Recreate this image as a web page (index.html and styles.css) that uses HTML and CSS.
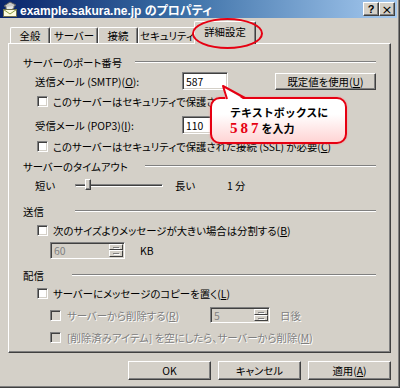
FILE: index.html
```html
<!DOCTYPE html>
<html lang="ja">
<head>
<meta charset="utf-8">
<title>プロパティ</title>
<link rel="stylesheet" href="styles.css">
</head>
<body>
<div class="window">
  <div class="titlebar">
    <svg class="app-icon" width="16" height="16" viewBox="0 0 16 16">
      <path d="M2 5 L8 1 L14 4 L8 8 Z" fill="#c8c8c8" stroke="#606060" stroke-width="1"/>
      <path d="M4 6 L4 8 L8 10 L12 7 L12 5" fill="#e8e8e8" stroke="#606060" stroke-width="1"/>
      <rect x="1.5" y="8.5" width="13" height="7" fill="#fffce0" stroke="#707050"/>
      <path d="M1.5 8.5 L8 13 L14.5 8.5" fill="none" stroke="#8a9a40" stroke-width="1"/>
    </svg>
    <span class="title">example.sakura.ne.jp のプロパティ</span>
    <div class="caption-btns">
      <span class="cap-btn">?</span>
      <span class="cap-btn cap-close">×</span>
    </div>
  </div>

  <div class="tabs">
    <div class="tab tab-general">全般</div>
    <div class="tab tab-server">サーバー</div>
    <div class="tab tab-conn">接続</div>
    <div class="tab tab-sec">セキュリティ</div>
    <div class="tab tab-adv active">詳細設定</div>
  </div>

  <div class="panel">
    <div class="row head h-port"><span class="head-label">サーバーのポート番号</span><span class="etch"></span></div>
    <div class="row indent r-smtp">
      <span class="lbl">送信メール (SMTP)(<u>O</u>):</span>
      <span class="textbox">587</span>
      <span class="btn btn-default">既定値を使用(<u>U</u>)</span>
    </div>
    <div class="row indent-cb r-cb1"><span class="cb"></span><span class="cb-text">このサーバーはセキュリティで保護された接続 (SSL) が必要(<u>Q</u>)</span></div>
    <div class="row indent r-pop">
      <span class="lbl">受信メール (POP3)(<u>I</u>):</span>
      <span class="textbox">110</span>
    </div>
    <div class="row indent-cb r-cb2"><span class="cb"></span><span class="cb-text">このサーバーはセキュリティで保護された接続 (SSL) が必要(<u>C</u>)</span></div>

    <div class="row head h-timeout"><span class="head-label">サーバーのタイムアウト</span><span class="etch"></span></div>
    <div class="row indent r-slider">
      <span class="s-short">短い</span>
      <span class="track"><span class="thumb"></span></span>
      <span class="s-long">長い</span>
      <span>1 分</span>
    </div>

    <div class="row head h-send"><span class="head-label">送信</span><span class="etch"></span></div>
    <div class="row indent-cb r-cb3"><span class="cb"></span><span class="cb-text">次のサイズよりメッセージが大きい場合は分割する(<u>B</u>)</span></div>
    <div class="row indent2 r-spin">
      <span class="spin spin-60"><span class="spin-val">60</span><span class="arrows"><span class="arr up"></span><span class="arr down"></span></span></span>
      <span class="unit">KB</span>
    </div>

    <div class="row head h-deliver"><span class="head-label">配信</span><span class="etch"></span></div>
    <div class="row indent-cb r-cb4"><span class="cb"></span><span class="cb-text">サーバーにメッセージのコピーを置く(<u>L</u>)</span></div>
    <div class="row indent2 r-dcb1">
      <span class="cb disabled"></span><span class="cb-text dis dcb-label">サーバーから削除する(<u>R</u>)</span>
      <span class="spin spin-5"><span class="spin-val">5</span><span class="arrows"><span class="arr up"></span><span class="arr down"></span></span></span>
      <span class="days dis">日後</span>
    </div>
    <div class="row indent2 r-dcb2"><span class="cb disabled"></span><span class="cb-text dis">[削除済みアイテム] を空にしたら、サーバーから削除(<u>M</u>)</span></div>
  </div>

  <div class="buttons">
    <span class="btn dlg-btn">OK</span>
    <span class="btn dlg-btn">キャンセル</span>
    <span class="btn dlg-btn">適用(<u>A</u>)</span>
  </div>

  <div class="ring"></div>

  <div class="callout">
    <div class="callout-body">
      <div class="c-line">テキストボックスに</div>
      <div class="c-line"><span class="num">587</span>を入力</div>
    </div>
    <svg class="callout-tail" width="40" height="22" viewBox="0 0 40 22">
      <polygon points="11,19 8,4 31,19" fill="#ffffff"/>
      <polyline points="12,17 8,4 30,16" fill="none" stroke="#e60012" stroke-width="2" stroke-linejoin="round"/>
    </svg>
  </div>
</div>
</body>
</html>
```

FILE: styles.css
```css
* { box-sizing: border-box; }
html, body { margin: 0; padding: 0; }
body {
  width: 400px;
  height: 388px;
  overflow: hidden;
  background: #d4d0c8;
  font-family: "Noto Sans CJK JP", sans-serif;
  font-size: 10.4px;
  color: #000;
  font-feature-settings: "palt";
}
u { text-decoration: underline; text-underline-offset: 1px; }

.window {
  position: relative;
  width: 400px;
  height: 388px;
  padding: 0 2px 2px 0;
  background: #d4d0c8;
  border-right: 1px solid #404040;
  border-bottom: 1px solid #404040;
  box-shadow: inset -1px -1px 0 #808080;
  display: flex;
  flex-direction: column;
}

/* title bar */
.titlebar {
  height: 18px;
  display: flex;
  align-items: center;
  padding-left: 2px;
  background: linear-gradient(to right, #0a246a 0%, #3a6ea5 45%, #a6caf0 100%);
}
.app-icon { flex: none; }
.title {
  margin-left: 2px;
  color: #fff;
  font-family: "Liberation Sans", "Noto Sans CJK JP", sans-serif;
  font-weight: bold;
  font-size: 12px;
  white-space: nowrap;
}
.caption-btns {
  margin-left: auto;
  margin-right: 2px;
  display: flex;
}
.cap-btn {
  width: 16px;
  height: 14px;
  display: flex;
  align-items: center;
  justify-content: center;
  background: #d4d0c8;
  border-top: 1px solid #fff;
  border-left: 1px solid #fff;
  border-right: 1px solid #404040;
  border-bottom: 1px solid #404040;
  box-shadow: inset -1px -1px 0 #808080;
  font-family: "Liberation Sans", sans-serif;
  font-weight: bold;
  font-size: 11px;
  line-height: 1;
}
.cap-close { font-size: 13px; font-family: "DejaVu Sans", sans-serif; font-weight: normal; }

/* tabs */
.tabs {
  margin-top: 3px;
  height: 22px;
  display: flex;
  align-items: flex-end;
  padding-left: 10px;
  position: relative;
  z-index: 2;
}
.tab {
  height: 16px;
  display: flex;
  align-items: center;
  justify-content: center;
  background: #d4d0c8;
  border-top: 1px solid #fff;
  border-left: 1px solid #fff;
  border-right: 1px solid #404040;
  border-radius: 2px 2px 0 0;
  box-shadow: inset -1px 0 0 #808080;
  white-space: nowrap;
}
.tab-general { width: 40px; }
.tab-server { width: 48px; }
.tab-conn { width: 40px; }
.tab-sec { width: 58px; }
.tab-adv { width: 62px; }
.tab.active {
  height: 23px;
  margin: 0 -2px -1px -2px;
  padding-bottom: 3px;
  position: relative;
}

/* panel */
.panel {
  margin-left: 8px;
  width: 383px;
  height: 310px;
  padding: 9px 14px 0 14px;
  border-top: 1px solid #fff;
  border-left: 1px solid #fff;
  border-right: 1px solid #404040;
  border-bottom: 1px solid #404040;
  box-shadow: inset -1px -1px 0 #808080;
  display: flex;
  flex-direction: column;
}
.row {
  height: 18px;
  display: flex;
  align-items: center;
  white-space: nowrap;
  margin-top: 2px;
}
.indent { padding-left: 12px; }
.indent-cb { padding-left: 14px; }
.indent2 { padding-left: 27px; }

.h-port { margin-top: 0; }
.r-smtp { margin-top: 1px; }
.r-pop { margin-top: 6px; }
.r-cb2 { margin-top: 3px; }
.r-slider { margin-top: 1px; }
.h-send { margin-top: 8px; }
.r-cb3 { margin-top: 1px; }
.h-deliver { margin-top: 7px; }
.r-cb4 { margin-top: 0; }
.r-dcb1, .r-dcb2 { margin-top: 4px; }

.head-label { flex: none; }
.h-port .head-label { width: 112px; }
.h-timeout .head-label { width: 122px; }
.h-send .head-label { width: 52px; }
.h-deliver .head-label { width: 49px; }
.etch {
  flex: 1;
  height: 2px;
  border-top: 1px solid #808080;
  border-bottom: 1px solid #fff;
}

.lbl { width: 147px; flex: none; }
.textbox {
  width: 46px;
  height: 18px;
  flex: none;
  padding: 0 3px;
  display: flex;
  align-items: center;
  background: #fff;
  border-top: 1px solid #808080;
  border-left: 1px solid #808080;
  border-right: 1px solid #fff;
  border-bottom: 1px solid #fff;
  box-shadow: inset 1px 1px 0 #404040, inset -1px -1px 0 #d4d0c8;
  font-feature-settings: normal;
}

.btn {
  display: flex;
  align-items: center;
  justify-content: center;
  background: #d4d0c8;
  border-top: 1px solid #fff;
  border-left: 1px solid #fff;
  border-right: 1px solid #404040;
  border-bottom: 1px solid #404040;
  box-shadow: inset -1px -1px 0 #808080;
  white-space: nowrap;
}
.btn-default {
  margin-left: auto;
  width: 101px;
  height: 17px;
}

.cb {
  width: 11px;
  height: 11px;
  flex: none;
  background: #fff;
  border-top: 1px solid #808080;
  border-left: 1px solid #808080;
  border-right: 1px solid #fff;
  border-bottom: 1px solid #fff;
  box-shadow: inset 1px 1px 0 #404040, inset -1px -1px 0 #d4d0c8;
}
.cb.disabled { background: #d4d0c8; }
.cb-text { margin-left: 5px; }
.dis { color: #808080; text-shadow: 1px 1px 0 #fff; }
.dcb-label { width: 143px; margin-left: 6px; }
.r-dcb2 .cb-text { margin-left: 6px; }

/* slider */
.s-short { width: 40px; }
.track {
  position: relative;
  width: 88px;
  height: 3px;
  border-top: 1px solid #808080;
  border-left: 1px solid #808080;
  border-bottom: 1px solid #fff;
  border-right: 1px solid #fff;
  background: #404040;
  background-clip: content-box;
}
.thumb {
  position: absolute;
  left: 9px;
  top: -6px;
  width: 6px;
  height: 11px;
  background: #d4d0c8;
  border-top: 1px solid #fff;
  border-left: 1px solid #fff;
  border-right: 1px solid #404040;
  border-bottom: 1px solid #404040;
  box-shadow: inset -1px -1px 0 #808080;
}
.s-long { margin-left: 12px; width: 52px; }

/* spinners */
.spin {
  display: flex;
  align-items: stretch;
  flex: none;
  background: #d4d0c8;
  border-top: 1px solid #808080;
  border-left: 1px solid #808080;
  border-right: 1px solid #fff;
  border-bottom: 1px solid #fff;
  box-shadow: inset 1px 1px 0 #404040;
  padding: 1px;
}
.spin-60 { width: 75px; height: 17px; }
.spin-5 { width: 60px; height: 16px; }
.spin-val {
  flex: 1;
  padding-left: 2px;
  display: flex;
  align-items: center;
  color: #808080;
  font-feature-settings: normal;
}
.arrows {
  width: 14px;
  display: flex;
  flex-direction: column;
}
.arr {
  flex: 1;
  position: relative;
  background: #d4d0c8;
  border-top: 1px solid #fff;
  border-left: 1px solid #fff;
  border-right: 1px solid #404040;
  border-bottom: 1px solid #404040;
}
.arr::after {
  content: "";
  position: absolute;
  left: 3px;
  right: 3px;
  top: 2px;
  height: 1px;
  background: #808080;
  box-shadow: 1px 1px 0 #fff;
}
.unit { margin-left: 15px; }
.days { margin-left: 10px; }

/* bottom buttons */
.buttons {
  margin-top: 8px;
  display: flex;
  justify-content: flex-end;
  gap: 7px;
  padding-right: 6px;
}
.dlg-btn { width: 83px; height: 19px; }

/* annotations */
.ring {
  position: absolute;
  left: 192px;
  top: 18px;
  width: 71px;
  height: 31px;
  border: 2px solid #e60012;
  border-radius: 50%;
  z-index: 5;
}
.callout {
  position: absolute;
  left: 210px;
  top: 97px;
  width: 137px;
  height: 47px;
  z-index: 5;
}
.callout-body {
  width: 100%;
  height: 100%;
  border: 2px solid #e60012;
  border-radius: 10px;
  background: linear-gradient(to bottom, #ffffff 35%, #ffd4d4 100%);
  box-shadow: 0 0 2px #ff9090;
  padding: 5px 0 0 18px;
  font-weight: bold;
  font-size: 11px;
  font-feature-settings: normal;
  white-space: nowrap;
}
.c-line {
  height: 16px;
  display: flex;
  align-items: center;
}
.num {
  color: #e60012;
  font-family: "Liberation Serif", serif;
  font-size: 15px;
  line-height: 16px;
  letter-spacing: 3px;
}
.callout-tail {
  position: absolute;
  left: 5px;
  top: -15px;
}
```
